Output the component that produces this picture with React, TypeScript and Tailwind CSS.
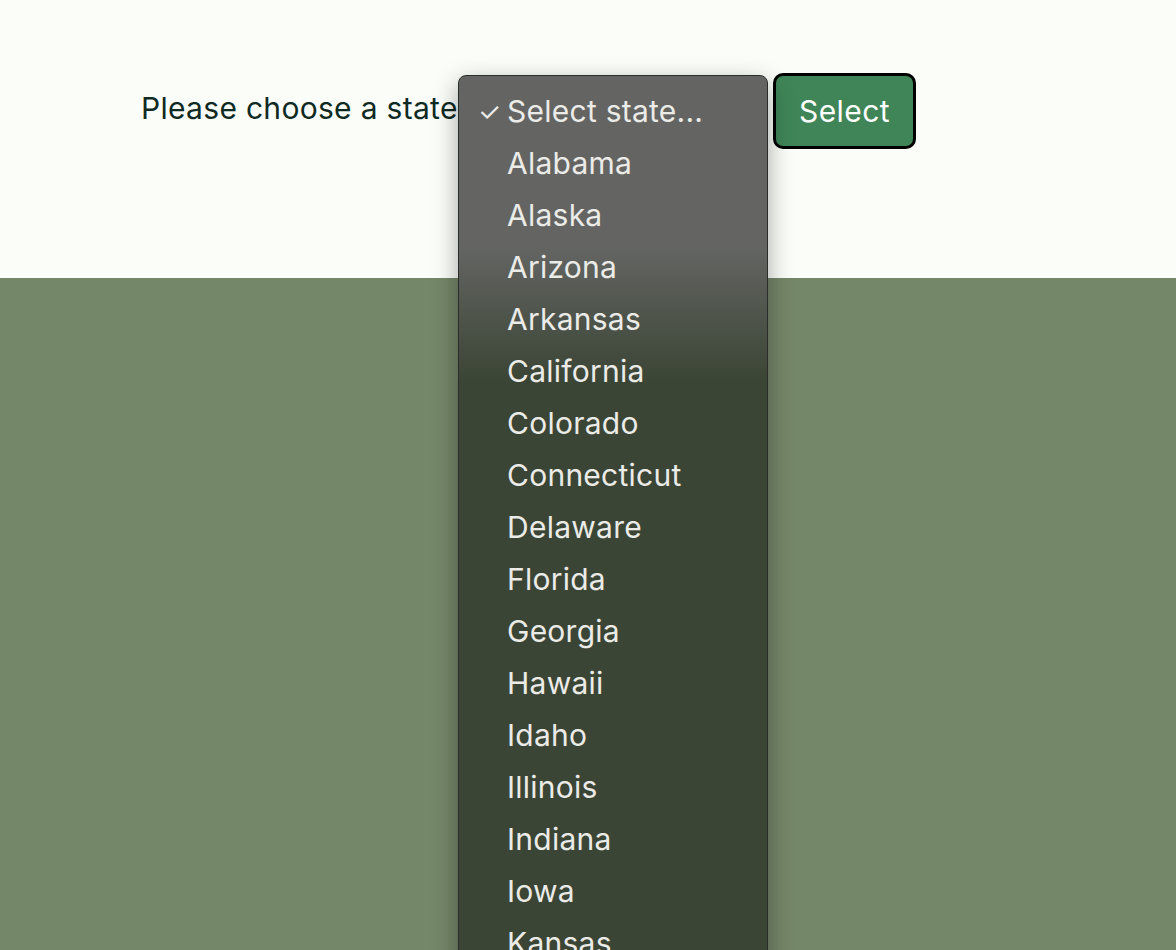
const states = [
  'Alabama',
  'Alaska',
  'Arizona',
  'Arkansas',
  'California',
  'Colorado',
  'Connecticut',
  'Delaware',
  'Florida',
  'Georgia',
  'Hawaii',
  'Idaho',
  'Illinois',
  'Indiana',
  'Iowa',
  'Kansas',
  'Kentucky',
];

const App = () => {
  return (
    <div className="relative flex flex-col h-[950px] overflow-hidden font-['Inter',sans-serif]">
      {/* Form */}
      <div className="flex items-start h-[278px] bg-[#fbfdf9] pl-[141px] pt-[73px]">
        <label className="w-[317px] mt-[15px] text-[30px] leading-[40px] text-[#0f2a23] tracking-[0.3px] whitespace-nowrap">
          Please choose a state
        </label>
        <div className="w-[310px] h-[40px] mt-[16px]" />
        <button className="ml-[5px] w-[143px] h-[76px] rounded-[10px] border-[3px] border-black bg-[#3f8558] text-[30px] tracking-[0.4px] text-white">
          Select
        </button>
      </div>
      <div className="flex-1 bg-[#758769]" />

      {/* Open select menu */}
      <div className="absolute left-[458px] top-[75px] w-[310px] h-[900px] rounded-lg border border-[#2b2d2a] shadow-[0_8px_24px_rgba(0,0,0,0.35)] bg-gradient-to-b from-[#646563] from-[19%] to-[#3b4535] to-[34%] overflow-hidden">
        <div className="flex flex-col pt-[9px] text-[30px] tracking-[0.25px] text-[#ebebe8]">
          <div className="flex items-center h-[52px]">
            <span className="w-[48px] pl-[19px] text-[26px]">✓</span>
            <span>Select state...</span>
          </div>
          {states.map((s) => (
            <div key={s} className="flex items-center h-[52px] pl-[48px]">
              {s}
            </div>
          ))}
        </div>
      </div>
    </div>
  );
};

export default App;
